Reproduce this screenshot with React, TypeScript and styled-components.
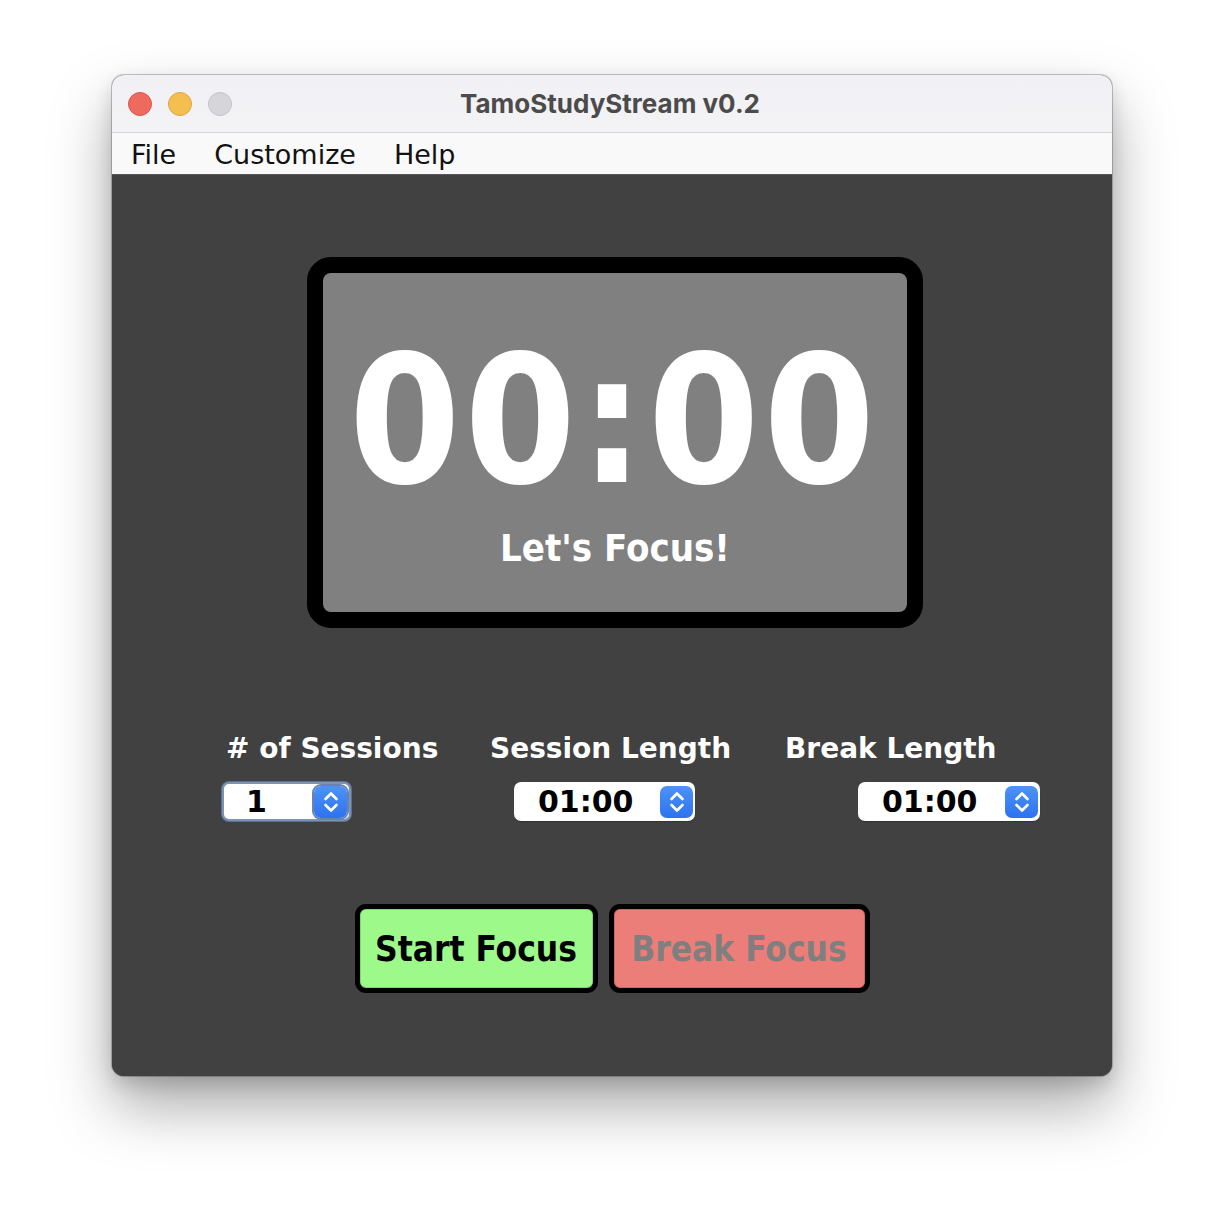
import React from "react";
import styled, { createGlobalStyle } from "styled-components";

const Global = createGlobalStyle`
  html, body { margin: 0; padding: 0; background: #ffffff; }
  #root { width: 1224px; height: 1224px; }
`;

const Page = styled.div`
  width: 1224px;
  height: 1224px;
  box-sizing: border-box;
  padding: 75px 0 0 112px;
  background: #ffffff;
`;

const Window = styled.div`
  width: 1000px;
  height: 1001px;
  border-radius: 12px;
  overflow: hidden;
  display: flex;
  flex-direction: column;
  background: #414141;
  box-shadow: 0 0 0 1px rgba(0, 0, 0, 0.22), 0 30px 60px rgba(0, 0, 0, 0.34),
    0 8px 18px rgba(0, 0, 0, 0.14);
`;

const TitleBar = styled.div`
  height: 57px;
  flex: none;
  display: grid;
  grid-template-columns: 1fr auto 1fr;
  align-items: center;
  padding: 0 16px;
  background: linear-gradient(#f1f0f4, #f3f2f5);
  border-bottom: 1px solid #d6d5d8;
`;

const Lights = styled.div`
  display: flex;
  gap: 16px;
  align-items: center;
`;

const Light = styled.span<{ $c: string; $b: string }>`
  width: 24px;
  height: 24px;
  border-radius: 50%;
  box-sizing: border-box;
  background: ${(p) => p.$c};
  border: 1px solid ${(p) => p.$b};
`;

const Title = styled.div`
  font-family: Inter, "Liberation Sans", sans-serif;
  font-weight: 700;
  font-size: 26px;
  color: #4b4b4b;
  margin-left: -4px;
`;

const MenuBar = styled.div`
  height: 41px;
  flex: none;
  display: flex;
  align-items: center;
  background: #f9f9f9;
  border-bottom: 1px solid #5a5a5a;
`;

const MenuItem = styled.span`
  font-family: "DejaVu Sans", sans-serif;
  font-size: 27px;
  color: #111;
  padding: 2px 19px 0;
  line-height: 41px;
`;

const Content = styled.div`
  flex: 1;
  display: flex;
  flex-direction: column;
  background: #414141;
`;

const TimerBox = styled.div`
  margin: 82px 0 0 195px;
  width: 616px;
  height: 371px;
  box-sizing: border-box;
  border: 16px solid #000;
  border-radius: 24px;
  background: #808080;
  display: flex;
  flex-direction: column;
  align-items: center;
`;

const TimeText = styled.div`
  margin-top: 45px;
  font-family: "DejaVu Sans Condensed", "DejaVu Sans", sans-serif;
  font-stretch: condensed;
  font-weight: 700;
  font-size: 178px;
  line-height: 206px;
  height: 206px;
  color: #fff;
  letter-spacing: 4px;
  margin-right: 2px;
`;

const StatusText = styled.div`
  margin-top: 2px;
  font-family: "DejaVu Sans Condensed", "DejaVu Sans", sans-serif;
  font-stretch: condensed;
  font-weight: 700;
  font-size: 38px;
  line-height: 44px;
  color: #fff;
`;

const Settings = styled.div`
  margin-top: 107px;
  display: flex;
  padding-left: 110px;
`;

const Field = styled.div<{ $w: number; $gap: number }>`
  width: ${(p) => p.$w}px;
  margin-right: ${(p) => p.$gap}px;
  display: flex;
  flex-direction: column;
`;

const Label = styled.div<{ $indent: number }>`
  font-family: "DejaVu Sans", sans-serif;
  font-weight: 700;
  font-size: 28px;
  line-height: 28px;
  color: #fff;
  white-space: nowrap;
  margin-left: ${(p) => p.$indent}px;
`;

const Spinner = styled.div<{ $w: number; $indent: number; $focused?: boolean }>`
  margin-top: 19px;
  margin-left: ${(p) => p.$indent}px;
  width: ${(p) => p.$w}px;
  height: 39px;
  box-sizing: border-box;
  background: #fff;
  border-radius: 7px;
  display: flex;
  align-items: center;
  justify-content: space-between;
  padding: 0 2px 0 ${(p) => (p.$focused ? 22 : 24)}px;
  border: ${(p) => (p.$focused ? "2px solid #7d93b5" : "none")};
  box-shadow: ${(p) =>
    p.$focused ? "0 0 0 1px #5d6f8c" : "0 1px 1px rgba(0,0,0,0.25)"};
`;

const SpinValue = styled.span`
  font-family: "DejaVu Sans", sans-serif;
  font-weight: 700;
  font-size: 30px;
  line-height: 39px;
  color: #000;
`;

const SpinButton = styled.span<{ $focused?: boolean }>`
  width: 33px;
  height: 32px;
  box-sizing: border-box;
  border-radius: 7px;
  background: linear-gradient(#4c93f8, #2e72ee);
  display: flex;
  align-items: center;
  justify-content: center;
  box-shadow: ${(p) => (p.$focused ? "0 0 0 2px #6b83a8" : "none")};
`;

const Buttons = styled.div`
  margin-top: 83px;
  display: flex;
  justify-content: center;
  gap: 11px;
`;

const ActionButton = styled.button<{ $bg: string; $fg: string; $w: number }>`
  width: ${(p) => p.$w}px;
  height: 89px;
  box-sizing: border-box;
  border: 5px solid #000;
  border-radius: 11px;
  background: ${(p) => p.$bg};
  color: ${(p) => p.$fg};
  font-family: "DejaVu Sans Condensed", "DejaVu Sans", sans-serif;
  font-stretch: condensed;
  font-weight: 700;
  font-size: 35px;
  padding: 0;
  display: flex;
  align-items: center;
  justify-content: center;
  box-shadow: inset 0 0 0 1px rgba(0, 0, 0, 0.15);
`;

const Arrows = () => (
  <svg width="18" height="26" viewBox="0 0 18 26" fill="none">
    <path
      d="M3.5 10 L9 4.5 L14.5 10"
      stroke="#fff"
      strokeWidth="2.6"
      strokeLinecap="round"
      strokeLinejoin="round"
    />
    <path
      d="M3.5 16 L9 21.5 L14.5 16"
      stroke="#fff"
      strokeWidth="2.6"
      strokeLinecap="round"
      strokeLinejoin="round"
    />
  </svg>
);

export default function App() {
  return (
    <>
      <Global />
      <Page>
        <Window>
          <TitleBar>
            <Lights>
              <Light $c="#ee6a5f" $b="#d9574d" />
              <Light $c="#f5bf4f" $b="#dca73c" />
              <Light $c="#d6d5d9" $b="#c3c2c6" />
            </Lights>
            <Title>TamoStudyStream v0.2</Title>
            <span />
          </TitleBar>
          <MenuBar>
            <MenuItem>File</MenuItem>
            <MenuItem>Customize</MenuItem>
            <MenuItem>Help</MenuItem>
          </MenuBar>
          <Content>
            <TimerBox>
              <TimeText>00:00</TimeText>
              <StatusText>Let's Focus!</StatusText>
            </TimerBox>
            <Settings>
              <Field $w={218} $gap={50}>
                <Label $indent={4}># of Sessions</Label>
                <Spinner $w={129} $indent={0} $focused>
                  <SpinValue>1</SpinValue>
                  <SpinButton $focused>
                    <Arrows />
                  </SpinButton>
                </Spinner>
              </Field>
              <Field $w={243} $gap={52}>
                <Label $indent={0}>Session Length</Label>
                <Spinner $w={181} $indent={24}>
                  <SpinValue>01:00</SpinValue>
                  <SpinButton>
                    <Arrows />
                  </SpinButton>
                </Spinner>
              </Field>
              <Field $w={255} $gap={0}>
                <Label $indent={0}>Break Length</Label>
                <Spinner $w={182} $indent={73}>
                  <SpinValue>01:00</SpinValue>
                  <SpinButton>
                    <Arrows />
                  </SpinButton>
                </Spinner>
              </Field>
            </Settings>
            <Buttons>
              <ActionButton $bg="#9cf98a" $fg="#000" $w={243}>
                Start Focus
              </ActionButton>
              <ActionButton $bg="#ec7e79" $fg="#7f7f7f" $w={261}>
                Break Focus
              </ActionButton>
            </Buttons>
          </Content>
        </Window>
      </Page>
    </>
  );
}
